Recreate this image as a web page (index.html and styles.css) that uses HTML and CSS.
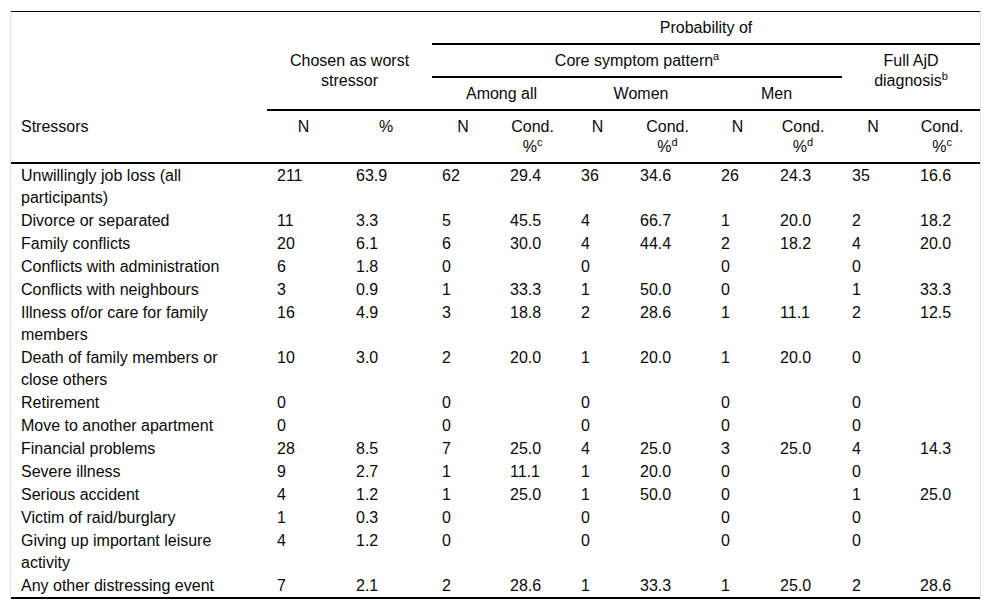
FILE: index.html
```html
<!DOCTYPE html>
<html lang="en">
<head>
<meta charset="utf-8">
<title>Stressors table</title>
<link rel="stylesheet" href="styles.css">
</head>
<body>
<div class="wrap">
<table class="tbl">
  <colgroup>
    <col class="w-stress">
    <col class="w79"><col class="w86">
    <col class="w68"><col class="w71">
    <col class="w59"><col class="w81">
    <col class="w59"><col class="w72">
    <col class="w68"><col class="w70">
  </colgroup>
  <thead>
    <tr>
      <th colspan="3" class="blank"></th>
      <th colspan="8" class="grp rule">Probability of</th>
    </tr>
    <tr>
      <th class="blank"></th>
      <th colspan="2" rowspan="2" class="grp rule">Chosen as worst stressor</th>
      <th colspan="6" class="grp rule">Core symptom pattern<sup>a</sup></th>
      <th colspan="2" rowspan="2" class="grp rule">Full AjD<br>diagnosis<sup>b</sup></th>
    </tr>
    <tr>
      <th class="blank"></th>
      <th colspan="2" class="grp rule">Among all</th>
      <th colspan="2" class="grp rule">Women</th>
      <th colspan="2" class="grp rule">Men</th>
    </tr>
    <tr>
      <th class="lead rule">Stressors</th>
      <th class="sub rule">N</th>
      <th class="sub rule">%</th>
      <th class="sub rule">N</th>
      <th class="sub rule">Cond.<br>%<sup>c</sup></th>
      <th class="sub rule">N</th>
      <th class="sub rule">Cond.<br>%<sup>d</sup></th>
      <th class="sub rule">N</th>
      <th class="sub rule">Cond.<br>%<sup>d</sup></th>
      <th class="sub rule">N</th>
      <th class="sub rule">Cond.<br>%<sup>c</sup></th>
    </tr>
  </thead>
  <tbody>
    <tr><td class="name">Unwillingly job loss (all participants)</td><td>211</td><td>63.9</td><td>62</td><td>29.4</td><td>36</td><td>34.6</td><td>26</td><td>24.3</td><td>35</td><td>16.6</td></tr>
    <tr><td class="name">Divorce or separated</td><td>11</td><td>3.3</td><td>5</td><td>45.5</td><td>4</td><td>66.7</td><td>1</td><td>20.0</td><td>2</td><td>18.2</td></tr>
    <tr><td class="name">Family conflicts</td><td>20</td><td>6.1</td><td>6</td><td>30.0</td><td>4</td><td>44.4</td><td>2</td><td>18.2</td><td>4</td><td>20.0</td></tr>
    <tr><td class="name">Conflicts with administration</td><td>6</td><td>1.8</td><td>0</td><td></td><td>0</td><td></td><td>0</td><td></td><td>0</td><td></td></tr>
    <tr><td class="name">Conflicts with neighbours</td><td>3</td><td>0.9</td><td>1</td><td>33.3</td><td>1</td><td>50.0</td><td>0</td><td></td><td>1</td><td>33.3</td></tr>
    <tr><td class="name">Illness of/or care for family members</td><td>16</td><td>4.9</td><td>3</td><td>18.8</td><td>2</td><td>28.6</td><td>1</td><td>11.1</td><td>2</td><td>12.5</td></tr>
    <tr><td class="name">Death of family members or close others</td><td>10</td><td>3.0</td><td>2</td><td>20.0</td><td>1</td><td>20.0</td><td>1</td><td>20.0</td><td>0</td><td></td></tr>
    <tr><td class="name">Retirement</td><td>0</td><td></td><td>0</td><td></td><td>0</td><td></td><td>0</td><td></td><td>0</td><td></td></tr>
    <tr><td class="name">Move to another apartment</td><td>0</td><td></td><td>0</td><td></td><td>0</td><td></td><td>0</td><td></td><td>0</td><td></td></tr>
    <tr><td class="name">Financial problems</td><td>28</td><td>8.5</td><td>7</td><td>25.0</td><td>4</td><td>25.0</td><td>3</td><td>25.0</td><td>4</td><td>14.3</td></tr>
    <tr><td class="name">Severe illness</td><td>9</td><td>2.7</td><td>1</td><td>11.1</td><td>1</td><td>20.0</td><td>0</td><td></td><td>0</td><td></td></tr>
    <tr><td class="name">Serious accident</td><td>4</td><td>1.2</td><td>1</td><td>25.0</td><td>1</td><td>50.0</td><td>0</td><td></td><td>1</td><td>25.0</td></tr>
    <tr><td class="name">Victim of raid/burglary</td><td>1</td><td>0.3</td><td>0</td><td></td><td>0</td><td></td><td>0</td><td></td><td>0</td><td></td></tr>
    <tr><td class="name">Giving up important leisure activity</td><td>4</td><td>1.2</td><td>0</td><td></td><td>0</td><td></td><td>0</td><td></td><td>0</td><td></td></tr>
    <tr><td class="name">Any other distressing event</td><td>7</td><td>2.1</td><td>2</td><td>28.6</td><td>1</td><td>33.3</td><td>1</td><td>25.0</td><td>2</td><td>28.6</td></tr>
  </tbody>
</table>
</div>
</body>
</html>
```

FILE: styles.css
```css
html, body {
  margin: 0;
  padding: 0;
  background: #fff;
}

body {
  font-family: "Liberation Sans", Arial, sans-serif;
  font-size: 16px;
  color: #0a0a0a;
}

.wrap {
  margin: 10px 0 0 10px;
  width: 969px;
  padding-top: 1px;
  border-left: 1px solid #e4e4e4;
  border-right: 1px solid #e4e4e4;
}

.tbl {
  width: 969px;
  table-layout: fixed;
  border-collapse: separate;
  border-spacing: 0;
  border-top: 1px solid #000;
  border-bottom: 2px solid #000;
}

.w-stress { width: 256px; }
.w59 { width: 59px; }
.w68 { width: 68px; }
.w70 { width: 70px; }
.w71 { width: 71px; }
.w72 { width: 72px; }
.w79 { width: 79px; }
.w81 { width: 81px; }
.w86 { width: 86px; }

.tbl th {
  font-weight: normal;
  line-height: 20px;
  padding: 6px 10px 5px 10px;
  vertical-align: top;
  text-align: center;
}

.tbl th.rule {
  border-bottom: 2px solid #000;
}

.tbl th.lead {
  text-align: left;
}

.tbl th.sub {
  padding-left: 7px;
  padding-right: 13px;
}

.tbl td {
  line-height: 22px;
  padding: 1px 10px 0 10px;
  vertical-align: top;
  text-align: left;
}

.tbl td.name {
  padding-right: 31px;
}

sup {
  font-size: 11px;
  line-height: 0;
  vertical-align: 6px;
}
```
